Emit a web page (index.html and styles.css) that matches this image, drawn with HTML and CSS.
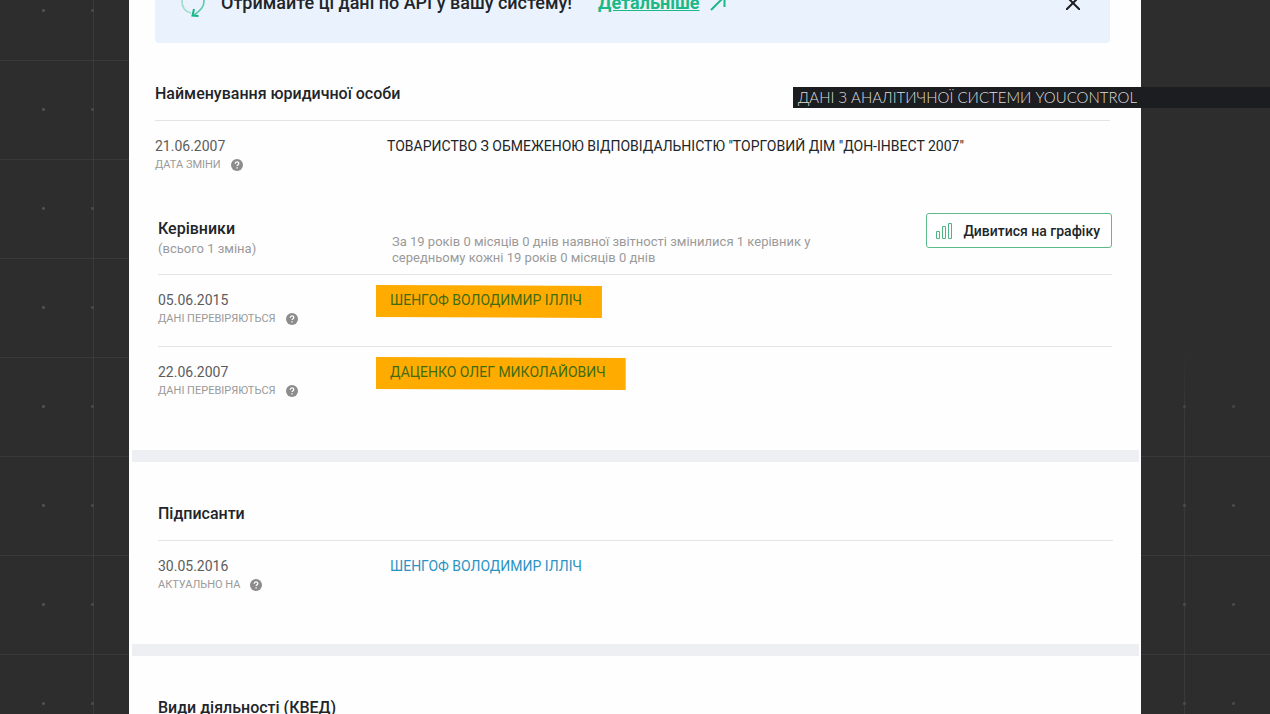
FILE: index.html
```
<!DOCTYPE html>
<html lang="uk">
<head>
    <meta charset="UTF-8">
    <meta name="viewport" content="width=device-width, initial-scale=1.0">
    <title>Історія змін юридичної особи</title>
    <link rel="stylesheet" href="styles.css">
</head>
<body>
    <svg class="sprite" width="0" height="0" aria-hidden="true">
        <symbol id="help" viewBox="0 0 12 12">
            <circle cx="6" cy="6" r="6" fill="#8c8c8c"/>
            <path d="M4.2 4.7C4.2 2.3 7.9 2.4 7.8 4.5C7.8 5.7 6.1 5.7 6.1 7.1M6.1 8.2V9.5" fill="none" stroke="#fff" stroke-width="1.3"/>
        </symbol>
    </svg>

    <div class="layout">
        <div class="side side-left"></div>
        <main class="sheet">
            <div class="top">
                <div class="banner">
                    <svg class="sync" width="24" height="28" viewBox="0 0 24 28" fill="none" stroke-width="1.6">
                        <path d="M10 24C4 23 1 18 1 13C1 7 5 3 10 2" stroke="#9fdcc9"/>
                        <path d="M14 2C20 4 23 8 23 13C23 18 19 22 13 26" stroke="#5cc9a7"/>
                        <path d="M13 20L11.500 26.500L17.500 27" stroke="#12b886" stroke-width="2"/>
                    </svg>
                    <span class="banner-text">Отримайте ці дані по API у вашу систему!</span>
                    <a class="banner-link" href="#">Детальніше</a>
                    <svg width="16" height="16" viewBox="0 0 16 16" fill="none" stroke="#1cb885" stroke-width="2">
                        <path d="M1 15L14 2M4 1.500H14.500V12"/>
                    </svg>
                    <button class="close" type="button" aria-label="Закрити">
                        <svg width="14" height="14" viewBox="0 0 14 14" fill="none" stroke="#1c1f22" stroke-width="2">
                            <path d="M0 0L14 14M14 0L0 14"/>
                        </svg>
                    </button>
                </div>

                <h2 class="title">Найменування юридичної особи</h2>
                <div class="row">
                    <div>
                        <div class="date">21.06.2007</div>
                        <div class="label">ДАТА ЗМІНИ <svg class="help"><use href="#help"/></svg></div>
                    </div>
                    <div class="company">ТОВАРИСТВО З ОБМЕЖЕНОЮ ВІДПОВІДАЛЬНІСТЮ "ТОРГОВИЙ ДІМ "ДОН-ІНВЕСТ 2007"</div>
                </div>
            </div>

            <section class="heads">
                <div class="heads-header">
                    <div class="heads-title">
                        <h2>Керівники</h2>
                        <div class="count">(всього 1 зміна)</div>
                    </div>
                    <p class="note">За 19 років 0 місяців 0 днів наявної звітності змінилися 1 керівник у середньому кожні 19 років 0 місяців 0 днів</p>
                    <button class="chart-btn" type="button">
                        <svg width="18" height="18" viewBox="0 0 18 18" fill="none" stroke="#4fb584">
                            <path d="M1.500 9.500H4.500V16.500H1.500ZM7.500 4.500H10.500V16.500H7.500ZM13.500 1.500H16.500V16.500H13.500Z"/>
                        </svg>
                        Дивитися на графіку
                    </button>
                </div>
                <div class="row">
                    <div>
                        <div class="date">05.06.2015</div>
                        <div class="label">ДАНІ ПЕРЕВІРЯЮТЬСЯ <svg class="help"><use href="#help"/></svg></div>
                    </div>
                    <div><a class="person marked" href="#">ШЕНГОФ ВОЛОДИМИР ІЛЛІЧ</a></div>
                </div>
                <div class="row">
                    <div>
                        <div class="date">22.06.2007</div>
                        <div class="label">ДАНІ ПЕРЕВІРЯЮТЬСЯ <svg class="help"><use href="#help"/></svg></div>
                    </div>
                    <div><a class="person marked" href="#">ДАЦЕНКО ОЛЕГ МИКОЛАЙОВИЧ</a></div>
                </div>
            </section>

            <div class="divider"></div>

            <section class="block">
                <h2 class="title">Підписанти</h2>
                <div class="row">
                    <div>
                        <div class="date">30.05.2016</div>
                        <div class="label">АКТУАЛЬНО НА <svg class="help"><use href="#help"/></svg></div>
                    </div>
                    <div><a class="person" href="#">ШЕНГОФ ВОЛОДИМИР ІЛЛІЧ</a></div>
                </div>
            </section>

            <div class="divider"></div>

            <section class="block">
                <h2 class="title">Види діяльності (КВЕД)</h2>
            </section>
        </main>
        <div class="side side-right"></div>
    </div>

    <div class="caption">ДАНІ З АНАЛІТИЧНОЇ СИСТЕМИ YOUCONTROL</div>
</body>
</html>
```
FILE: styles.css
```
* {
    box-sizing: border-box;
}
body {
    margin: 0;
    height: 100vh;
    overflow: hidden;
    position: relative;
    font-family: Roboto, "Noto Sans", sans-serif;
    font-size: 14px;
    line-height: 20px;
    color: #212529;
    background: #2d2d2d;
}
h2 {
    margin: 0;
    font-size: 16px;
    font-weight: 500;
    line-height: 20px;
}
.sprite {
    position: absolute;
}
.layout {
    display: grid;
    grid-template-columns: 129fr 1012fr 129fr;
    min-height: 100vh;
}

/* dark sides with a faint grid and dots */
.side {
    background-color: #2d2d2d;
    background-image:
        radial-gradient(circle, #505050 1px, transparent 2px),
        radial-gradient(circle, #4a4a4a 1px, transparent 2px),
        linear-gradient(#3a3a3a, #3a3a3a),
        linear-gradient(#393939 1px, transparent 1px);
    background-size: 99px 99px, 99px 99px, 1px 100%, 100% 99px;
    background-repeat: repeat-y, repeat-y, no-repeat, repeat;
}
.side-left {
    background-position: -6px -39px, 43px -39px, 93px 0, 0 60px;
}
.side-right {
    background-image:
        linear-gradient(#2d2d2d 350px, transparent 420px),
        radial-gradient(circle, #4a4a4a 1px, transparent 2px),
        radial-gradient(circle, #4a4a4a 1px, transparent 2px),
        linear-gradient(#3a3a3a, #3a3a3a),
        linear-gradient(#393939 1px, transparent 1px);
    background-size: 100% 100%, 99px 99px, 99px 99px, 1px 100%, 100% 99px;
    background-repeat: no-repeat, repeat-y, repeat-y, no-repeat, repeat;
    background-position: 0 0, -6px -39px, 43px -39px, 43px 0, 0 60px;
}

/* the sheet is scrolled a little past the top of the banner */
.sheet {
    margin-top: -37px;
    background: #fefefe;
}
.top {
    padding: 0 31px 0 26px;
}
.banner {
    display: flex;
    align-items: center;
    height: 80px;
    padding: 0 30px 0 26px;
    margin-bottom: 41px;
    border-radius: 4px;
    background: #eaf2fd;
    font-size: 18px;
    font-weight: 500;
}
.banner-text {
    margin: 0 26px 0 16px;
}
.banner-link {
    margin-right: 10px;
    color: #1cb885;
    font-weight: 700;
}
.close {
    margin-left: auto;
    padding: 0;
    border: 0;
    background: none;
    line-height: 0;
}
.title {
    padding-bottom: 16px;
}
.row {
    display: grid;
    grid-template-columns: 232px 1fr;
    padding: 15px 0 18px;
    border-top: 1px solid #e4e4e6;
}
.date {
    color: #5c5c5c;
}
.label {
    display: flex;
    align-items: center;
    gap: 10px;
    font-size: 11px;
    line-height: 18px;
    color: #9a9a9a;
}
.help {
    width: 12px;
    height: 12px;
}
.person {
    color: #2a93c4;
    text-decoration: none;
}
.marked {
    display: inline-block;
    margin: -5px 0 -8px -14px;
    padding: 5px 20px 8px 14px;
    color: #3f6b12;
    background: #ffab00;
    clip-path: polygon(0 0, 100% 1px, 100% 100%, 0 calc(100% - 1px));
}

.heads {
    margin-top: 21px;
    padding: 0 29px 32px 29px;
}
.heads-header {
    display: grid;
    grid-template-columns: 234px 1fr auto;
    align-items: end;
}
.heads-title {
    padding-bottom: 15px;
}
.count {
    font-size: 13px;
    color: #9a9a9a;
}
.note {
    max-width: 440px;
    margin: 0 0 8px;
    font-size: 13px;
    line-height: 16px;
    color: #9a9a9a;
}
.chart-btn {
    display: flex;
    align-items: center;
    gap: 10px;
    height: 35px;
    margin-bottom: 26px;
    padding: 0 11px 0 8px;
    border: 1px solid #5dbb8b;
    border-radius: 3px;
    background: #fff;
    color: #212529;
    font: 500 14px/20px Roboto, "Noto Sans", sans-serif;
}
.divider {
    height: 12px;
    margin: 0 2px 0 3px;
    background: #eeeff3;
}
.block {
    padding: 42px 28px 32px 29px;
}

/* source caption over the sheet */
.caption {
    position: absolute;
    top: 87px;
    right: 0;
    padding: 0 133px 0 5px;
    background: #1c1d20;
    color: #dcdcdc;
    font-family: Lato, "Noto Sans", sans-serif;
    font-size: 15px;
    font-weight: 300;
    line-height: 21px;
}
```
